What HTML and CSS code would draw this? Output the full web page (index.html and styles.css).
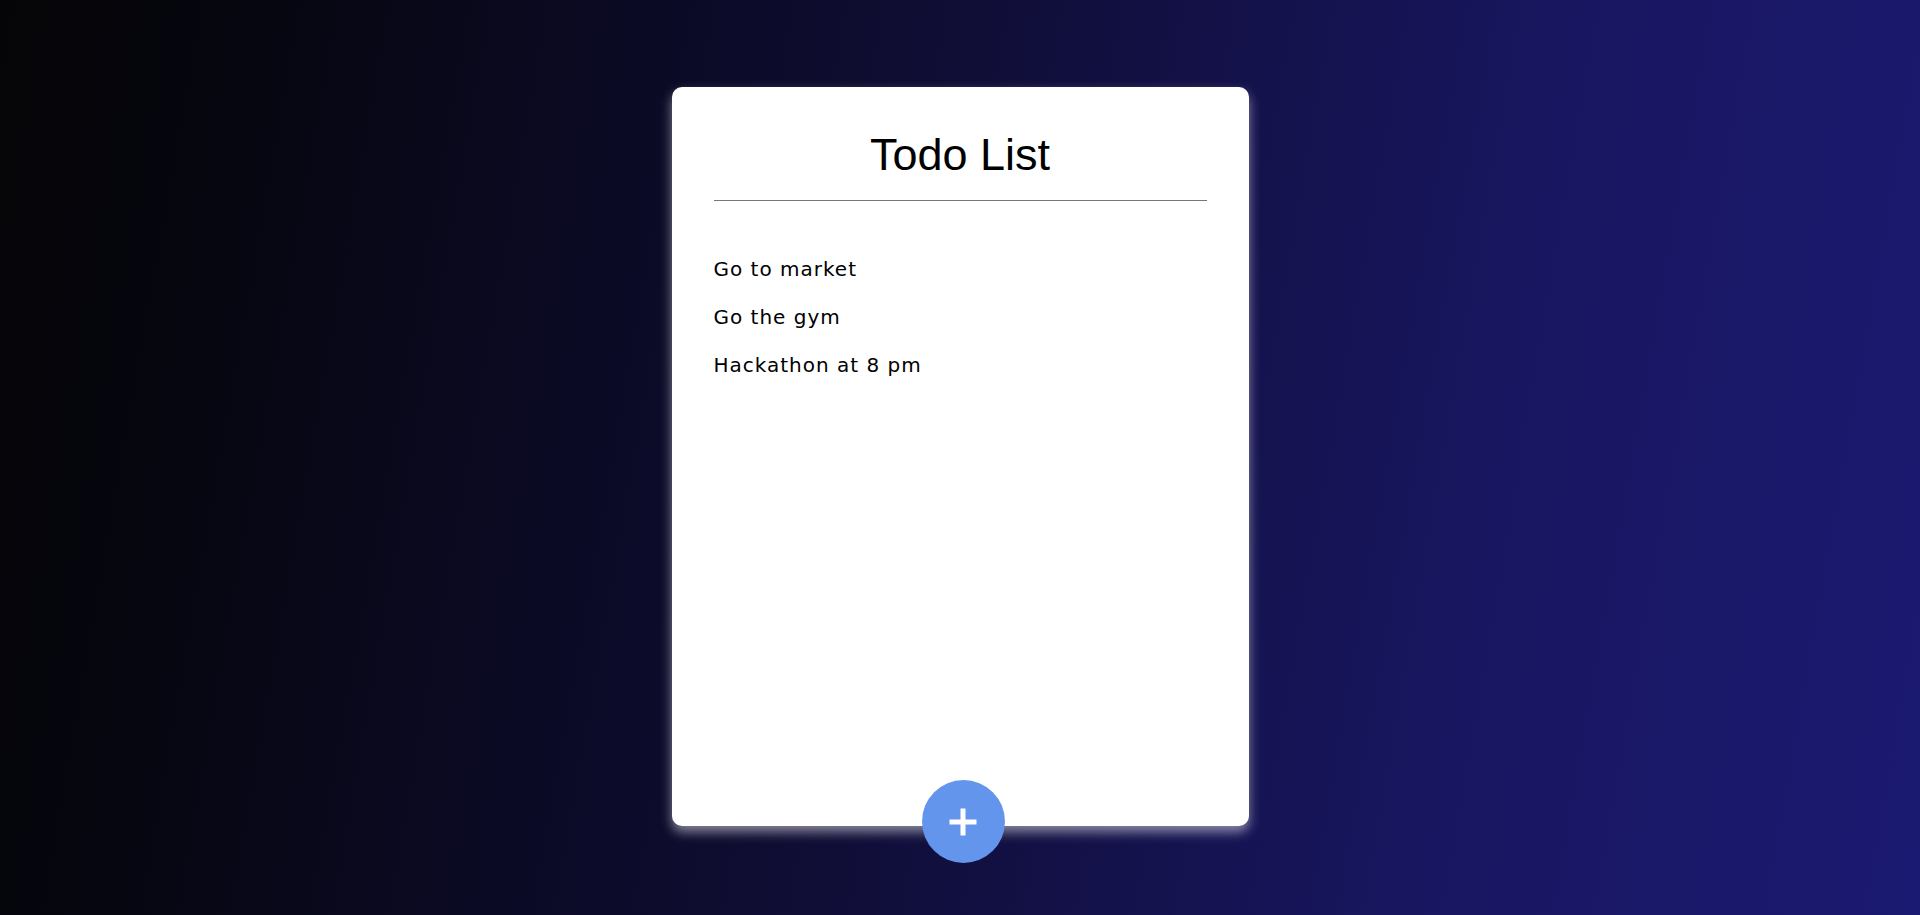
FILE: index.html
```html
<!DOCTYPE html>
<html lang="en">
<head>
<meta charset="utf-8">
<title>Todo List</title>
<link rel="stylesheet" href="styles.css">
</head>
<body>
<main class="page">
  <section class="card">
    <h1 class="title">Todo List</h1>
    <hr class="divider">
    <ul class="todos">
      <li class="todo">Go to market</li>
      <li class="todo">Go the gym</li>
      <li class="todo">Hackathon at 8 pm</li>
    </ul>
    <button class="add-btn" aria-label="Add todo"></button>
  </section>
</main>
</body>
</html>
```

FILE: styles.css
```css
html, body {
  margin: 0;
  padding: 0;
}

body {
  width: 1920px;
  height: 915px;
  overflow: hidden;
  background: linear-gradient(100deg, #050507 0%, #060610 12%, #0f0d33 45%, #18165f 75%, #1b1a72 100%);
}

.page {
  display: flex;
  justify-content: center;
  padding-top: 87px;
}

.card {
  position: relative;
  box-sizing: border-box;
  width: 577px;
  height: 739px;
  padding: 42px 42px 0;
  background: #fff;
  border-radius: 10px;
  box-shadow: 0 6px 12px rgba(255, 255, 255, 0.5);
}

.title {
  margin: 0;
  text-align: center;
  font-family: "Liberation Sans", Arial, sans-serif;
  font-weight: 400;
  font-size: 45px;
  line-height: 52px;
  color: #000;
}

.divider {
  margin: 19px 0 0;
  border: 0;
  height: 1px;
  background: #777;
}

.todos {
  list-style: none;
  margin: 44px 0 0;
  padding: 0;
}

.todo {
  font-family: "DejaVu Sans", sans-serif;
  font-size: 20px;
  letter-spacing: 1px;
  line-height: 48px;
  color: #000;
}

.add-btn {
  position: absolute;
  left: 250px;
  bottom: -37px;
  width: 83px;
  height: 83px;
  padding: 0;
  border: 0;
  border-radius: 50%;
  background: #6495ed;
  cursor: pointer;
}

.add-btn::before,
.add-btn::after {
  content: "";
  position: absolute;
  left: 50%;
  top: 50%;
  background: #fff;
  transform: translate(-50%, -50%);
}

.add-btn::before {
  width: 27px;
  height: 5px;
}

.add-btn::after {
  width: 5px;
  height: 27px;
}
```
